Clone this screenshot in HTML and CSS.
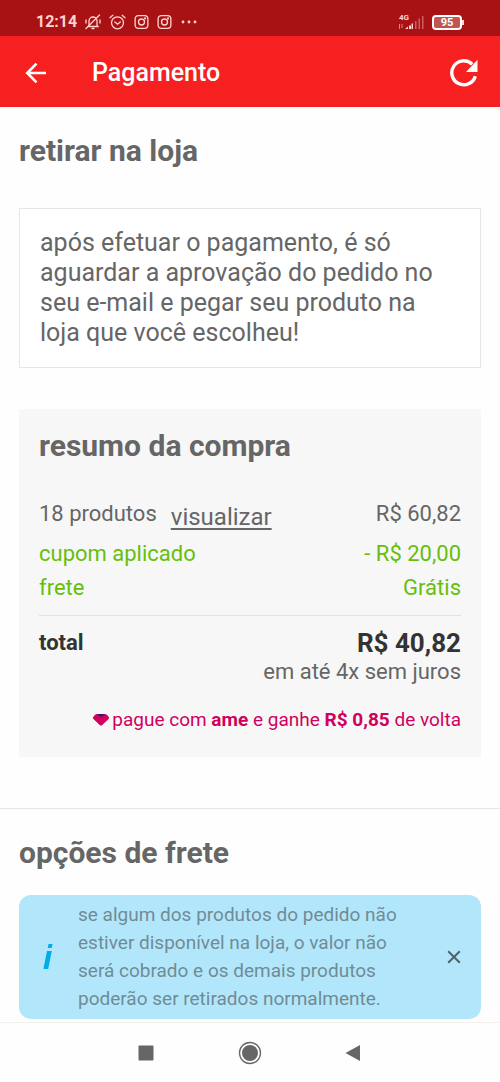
FILE: index.html
```html
<!DOCTYPE html>
<html lang="pt-BR">
<head>
  <meta charset="utf-8">
  <meta name="viewport" content="width=device-width, initial-scale=1">
  <title>Pagamento</title>
  <link rel="stylesheet" href="styles.css">
</head>
<body>
  <div class="status-bar">
    <div class="status-left">
      <span class="clock">12:14</span>
      <svg width="16" height="16" viewBox="0 0 16 16" fill="none" stroke="currentColor" stroke-width="1.3" stroke-linecap="round">
        <path d="M4 11V7a4 4 0 0 1 8 0v4l1 1.500H3zM7 14.500h2M1 14.500 14.500 1M1 6v3M15 6v3"/>
      </svg>
      <svg width="17" height="16" viewBox="0 0 17 16" fill="none" stroke="currentColor" stroke-width="1.300" stroke-linecap="round">
        <circle cx="8.500" cy="8.800" r="6"/><path d="M5.800 8 8.500 10.200 11.300 8M1 3.800 3.800 1.200M16 3.800 13.200 1.200"/>
      </svg>
      <svg class="gram" width="16" height="16" viewBox="0 0 16 16" fill="none" stroke="currentColor" stroke-width="1.400">
        <rect x="1.200" y="1.200" width="13.600" height="13.600" rx="3.500"/><circle cx="8" cy="8" r="3.200"/><circle cx="11.800" cy="4.200" r=".5"/>
      </svg>
      <svg class="gram" width="16" height="16" viewBox="0 0 16 16" fill="none" stroke="currentColor" stroke-width="1.400">
        <rect x="1.200" y="1.200" width="13.600" height="13.600" rx="3.500"/><circle cx="8" cy="8" r="3.200"/><circle cx="11.800" cy="4.200" r=".5"/>
      </svg>
      <svg class="more" width="18" height="4" viewBox="0 0 18 4" fill="currentColor">
        <circle cx="3" cy="2" r="1.400"/><circle cx="9" cy="2" r="1.400"/><circle cx="15" cy="2" r="1.400"/>
      </svg>
    </div>
    <div class="status-right">
      <div class="signal">
        <span class="network">4G</span>
        <svg width="26" height="16" viewBox="0 0 26 16" fill="currentColor">
          <path opacity=".6" d="M1 10h1v5H1zM3.500 10h1v4h-1z"/>
          <path d="M7 15l3-2.500V15zM11 11.500h2V15h-2zM13.500 9.500h1.500V15h-1.500z"/>
          <path opacity=".4" d="M17 7h1.500v8H17zM20.500 4.500H22V15h-1.500zM24 2h1.500v13H24z"/>
        </svg>
      </div>
      <div class="battery"><span class="battery-level">95</span></div>
    </div>
  </div>

  <header class="app-bar">
    <button class="icon-button" type="button" aria-label="Voltar">
      <svg width="22" height="22" viewBox="0 0 22 22" fill="none" stroke="currentColor" stroke-width="2.600">
        <path d="M21 11H2.500M11.500 1.700 2.200 11l9.300 9.300"/>
      </svg>
    </button>
    <h1 class="app-title">Pagamento</h1>
    <button class="icon-button" type="button" aria-label="Atualizar">
      <svg width="28" height="28" viewBox="0 0 28 28">
        <path d="M25.300 17.200A12 12 0 1 1 22.200 5.200" fill="none" stroke="currentColor" stroke-width="3.400"/>
        <path d="M27.500.800v12.200H16z" fill="currentColor"/>
      </svg>
    </button>
  </header>

  <main class="content">
    <section class="section">
      <h2 class="heading">retirar na loja</h2>
      <p class="notice">após efetuar o pagamento, é só aguardar a aprovação do pedido no seu e-mail e pegar seu produto na loja que você escolheu!</p>
      <div class="summary">
        <h2 class="heading">resumo da compra</h2>
        <dl class="lines">
          <div class="line line-products">
            <dt>18 produtos <a class="view-link" href="#produtos">visualizar</a></dt>
            <dd>R$ 60,82</dd>
          </div>
          <div class="line discount"><dt>cupom aplicado</dt><dd>- R$ 20,00</dd></div>
          <div class="line discount"><dt>frete</dt><dd>Grátis</dd></div>
          <div class="line total">
            <dt>total</dt>
            <dd><strong class="total-value">R$ 40,82</strong><span class="installments">em até 4x sem juros</span></dd>
          </div>
        </dl>
        <p class="cashback">
          <svg width="18" height="14" viewBox="0 0 18 14">
            <path d="M5 1h8q1 0 1.800.700l2 2.300q.700 1-.200 1.900L10.300 12q-1.300 1.100-2.600 0L1.400 5.900Q.500 5 1.200 4l2-2.300Q4 1 5 1z" fill="#d1005d"/>
            <path d="M5 1h8L10 3.300q-1 .600-2 0z" fill="#2b1a80"/>
          </svg>
          <span>pague com <b>ame</b> e ganhe <b>R$ 0,85</b> de volta</span>
        </p>
      </div>
    </section>

    <section class="section shipping">
      <h2 class="heading">opções de frete</h2>
      <div class="alert" role="status">
        <svg class="alert-icon" width="12" height="28" viewBox="0 0 12 28" fill="#00ade6">
          <path d="M6.500 1h4l-.800 4h-4zM5 8h4.800L6.200 26H1.400z"/>
        </svg>
        <p class="alert-text">se algum dos produtos do pedido não estiver disponível na loja, o valor não será cobrado e os demais produtos poderão ser retirados normalmente.</p>
        <button class="icon-button close" type="button" aria-label="Fechar">
          <svg width="14" height="14" viewBox="0 0 14 14" fill="none" stroke="currentColor" stroke-width="2">
            <path d="M1.200 1.200l11.600 11.600M12.800 1.200 1.200 12.800"/>
          </svg>
        </button>
      </div>
    </section>
  </main>

  <nav class="system-nav" aria-label="Sistema">
    <button class="icon-button" type="button" aria-label="Recentes">
      <svg width="24" height="24" viewBox="0 0 24 24" fill="currentColor"><rect x="4.500" y="4.500" width="15" height="15" rx="1"/></svg>
    </button>
    <button class="icon-button" type="button" aria-label="Início">
      <svg width="24" height="24" viewBox="0 0 24 24" fill="currentColor"><circle cx="12" cy="12" r="8"/><circle cx="12" cy="12" r="10.500" fill="none" stroke="currentColor" stroke-width="1.300"/></svg>
    </button>
    <button class="icon-button" type="button" aria-label="Voltar uma tela">
      <svg width="24" height="24" viewBox="0 0 24 24" fill="currentColor"><path d="M18 4v16L3.500 12z"/></svg>
    </button>
  </nav>
</body>
</html>
```

FILE: styles.css
```css
* {
  box-sizing: border-box;
}

body {
  margin: 0;
  min-height: 100vh;
  display: flex;
  flex-direction: column;
  background: #fefefe;
  color: #666;
  font-family: Roboto, "Liberation Sans", sans-serif;
  font-size: 22px;
  line-height: 30px;
}

h1, h2, p, dl, dd {
  margin: 0;
}

svg {
  display: block;
  flex: none;
}

.icon-button {
  display: flex;
  padding: 0;
  border: 0;
  background: none;
  color: inherit;
}

.status-bar {
  height: 36px;
  padding: 8px 36px 0;
  display: flex;
  justify-content: space-between;
  background: #a81214;
  color: #ffd3cf;
}

.status-left,
.status-right {
  height: 28px;
  display: flex;
  align-items: center;
  gap: 8px;
}

.clock {
  font-size: 16px;
  font-weight: 700;
}

.signal {
  position: relative;
}

.network {
  position: absolute;
  top: 0;
  left: 1px;
  font-size: 8px;
  font-weight: 700;
  line-height: 8px;
}

.battery {
  display: flex;
  align-items: center;
}

.battery::after {
  content: "";
  width: 2px;
  height: 5px;
  background: currentColor;
}

.battery-level {
  width: 30px;
  height: 15px;
  border: 2px solid currentColor;
  border-radius: 4px;
  background: #bf5652;
  color: #fff;
  font-size: 11px;
  font-weight: 700;
  line-height: 11px;
  text-align: center;
}

.gram {
  width: 15px;
}

.app-bar {
  height: 71px;
  padding: 2px 22px 0 25px;
  display: flex;
  align-items: center;
  background: #f72020;
  color: #fff;
}

.app-title {
  flex: 1;
  padding-left: 45px;
  font-size: 25px;
  font-weight: 500;
}

.content {
  flex: 1;
}

.section {
  padding: 27px 19px 51px;
}

.heading {
  font-size: 30px;
  font-weight: 700;
  line-height: 34px;
}

.notice {
  margin: 40px 0 41px;
  padding: 19px 20px;
  border: 1px solid #e6e6e6;
  background: #fff;
  font-size: 25px;
}

.summary {
  padding: 20px 20px 25px;
  background: #f7f7f7;
}

.lines {
  margin-top: 34px;
}

.line {
  display: flex;
  justify-content: space-between;
  line-height: 34px;
}

.line-products {
  margin-bottom: 3px;
}

.line-products dt {
  display: flex;
  gap: 14px;
}

.view-link {
  padding-top: 3px;
  color: inherit;
  font-size: 24px;
  text-underline-offset: 3px;
}

.discount {
  color: #66bf0d;
}

.total {
  margin-top: 10px;
  padding-top: 12px;
  border-top: 1px solid #e2e2e2;
  color: #333;
  line-height: 30px;
}

.total dt {
  font-weight: 700;
}

.total dd {
  display: flex;
  flex-direction: column;
  align-items: flex-end;
}

.total-value {
  font-size: 26px;
}

.installments {
  color: #666;
  line-height: 28px;
}

.cashback {
  margin-top: 22px;
  display: flex;
  justify-content: flex-end;
  align-items: center;
  gap: 2px;
  color: #d1005d;
  font-size: 19px;
  line-height: 24px;
}

.shipping {
  padding-bottom: 3px;
  border-top: 1px solid #e6e6e6;
}

.alert {
  margin-top: 25px;
  padding: 6px 20px 6px 23px;
  display: flex;
  align-items: center;
  border-radius: 12px;
  background: #b2e7fb;
}

.alert-text {
  flex: 1;
  padding: 0 50px 0 24px;
  color: #718b96;
  font-size: 19px;
  line-height: 28px;
}

.close {
  color: #50616a;
}

.system-nav {
  height: 60px;
  padding: 0 94px;
  display: flex;
  justify-content: space-around;
  align-items: center;
  border-top: 1px solid #f3efed;
}
```
